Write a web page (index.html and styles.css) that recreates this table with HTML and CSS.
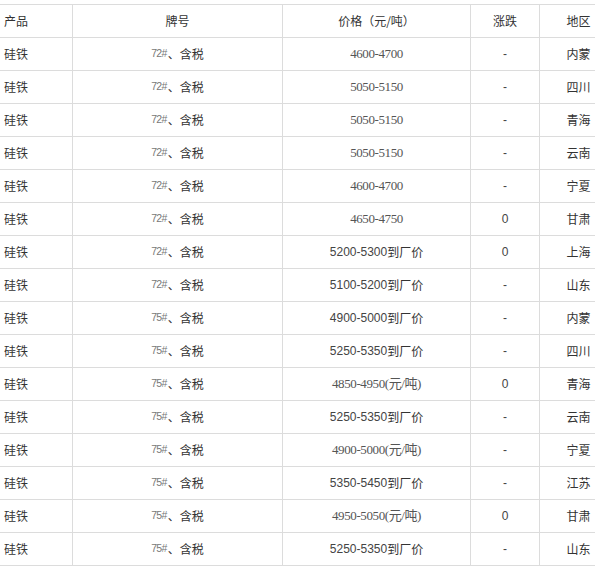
FILE: index.html
```
<!DOCTYPE html>
<html lang="zh-CN">
<head>
<meta charset="utf-8">
<title>硅铁价格</title>
<link rel="stylesheet" href="styles.css">
</head>
<body>
<div class="viewport">
  <div class="grid">
    <div class="cell first">产品</div><div class="cell">牌号</div><div class="cell">价格（元/吨）</div><div class="cell">涨跌</div><div class="cell">地区</div>

    <div class="cell first">硅铁</div><div class="cell"><span class="grade">72#</span>、含税</div><div class="cell"><span class="serif">4600-4700</span></div><div class="cell chg">-</div><div class="cell">内蒙</div>
    <div class="cell first">硅铁</div><div class="cell"><span class="grade">72#</span>、含税</div><div class="cell"><span class="serif">5050-5150</span></div><div class="cell chg">-</div><div class="cell">四川</div>
    <div class="cell first">硅铁</div><div class="cell"><span class="grade">72#</span>、含税</div><div class="cell"><span class="serif">5050-5150</span></div><div class="cell chg">-</div><div class="cell">青海</div>
    <div class="cell first">硅铁</div><div class="cell"><span class="grade">72#</span>、含税</div><div class="cell"><span class="serif">5050-5150</span></div><div class="cell chg">-</div><div class="cell">云南</div>
    <div class="cell first">硅铁</div><div class="cell"><span class="grade">72#</span>、含税</div><div class="cell"><span class="serif">4600-4700</span></div><div class="cell chg">-</div><div class="cell">宁夏</div>
    <div class="cell first">硅铁</div><div class="cell"><span class="grade">72#</span>、含税</div><div class="cell"><span class="serif">4650-4750</span></div><div class="cell chg">0</div><div class="cell">甘肃</div>
    <div class="cell first">硅铁</div><div class="cell"><span class="grade">72#</span>、含税</div><div class="cell"><span class="sans">5200-5300</span>到厂价</div><div class="cell chg">0</div><div class="cell">上海</div>
    <div class="cell first">硅铁</div><div class="cell"><span class="grade">72#</span>、含税</div><div class="cell"><span class="sans">5100-5200</span>到厂价</div><div class="cell chg">-</div><div class="cell">山东</div>
    <div class="cell first">硅铁</div><div class="cell"><span class="grade">75#</span>、含税</div><div class="cell"><span class="sans">4900-5000</span>到厂价</div><div class="cell chg">-</div><div class="cell">内蒙</div>
    <div class="cell first">硅铁</div><div class="cell"><span class="grade">75#</span>、含税</div><div class="cell"><span class="sans">5250-5350</span>到厂价</div><div class="cell chg">-</div><div class="cell">四川</div>
    <div class="cell first">硅铁</div><div class="cell"><span class="grade">75#</span>、含税</div><div class="cell"><span class="serif">4850-4950(元/吨)</span></div><div class="cell chg">0</div><div class="cell">青海</div>
    <div class="cell first">硅铁</div><div class="cell"><span class="grade">75#</span>、含税</div><div class="cell"><span class="sans">5250-5350</span>到厂价</div><div class="cell chg">-</div><div class="cell">云南</div>
    <div class="cell first">硅铁</div><div class="cell"><span class="grade">75#</span>、含税</div><div class="cell"><span class="serif">4900-5000(元/吨)</span></div><div class="cell chg">-</div><div class="cell">宁夏</div>
    <div class="cell first">硅铁</div><div class="cell"><span class="grade">75#</span>、含税</div><div class="cell"><span class="sans">5350-5450</span>到厂价</div><div class="cell chg">-</div><div class="cell">江苏</div>
    <div class="cell first">硅铁</div><div class="cell"><span class="grade">75#</span>、含税</div><div class="cell"><span class="serif">4950-5050(元/吨)</span></div><div class="cell chg">0</div><div class="cell">甘肃</div>
    <div class="cell first">硅铁</div><div class="cell"><span class="grade">75#</span>、含税</div><div class="cell"><span class="sans">5250-5350</span>到厂价</div><div class="cell chg">-</div><div class="cell">山东</div>
  </div>
</div>
</body>
</html>
```

FILE: styles.css
```
html, body {
  margin: 0;
  padding: 0;
  background: #ffffff;
}

.viewport {
  width: 595px;
  height: 570px;
  overflow: hidden;
  padding-top: 4px;
  box-sizing: border-box;
}

.grid {
  display: grid;
  grid-template-columns: 73px 210px 188px 69px 78px;
  grid-auto-rows: 33px;
  width: max-content;
  border-top: 1px solid #dcdcdc;
  font-family: "Noto Sans CJK SC", "Noto Sans", sans-serif;
  font-size: 12px;
  color: #333333;
}

.cell {
  box-sizing: border-box;
  border-right: 1px solid #dcdcdc;
  border-bottom: 1px solid #dcdcdc;
  display: flex;
  align-items: center;
  justify-content: center;
  white-space: nowrap;
  line-height: 1;
  padding-bottom: 1px;
}

.cell.first {
  justify-content: flex-start;
  padding-left: 4px;
}

.grade {
  font-family: "Liberation Sans", sans-serif;
  font-size: 10.5px;
  letter-spacing: -0.6px;
  color: #777777;
  margin-right: 1px;
}

.serif {
  font-family: "Liberation Serif", "Noto Sans CJK SC", serif;
  font-size: 13px;
  letter-spacing: -0.4px;
  color: #555555;
}

.sans {
  font-family: "Liberation Sans", sans-serif;
  font-size: 12px;
  color: #444444;
}

.chg {
  font-family: "Liberation Sans", sans-serif;
  font-size: 12px;
  color: #444444;
}
```
